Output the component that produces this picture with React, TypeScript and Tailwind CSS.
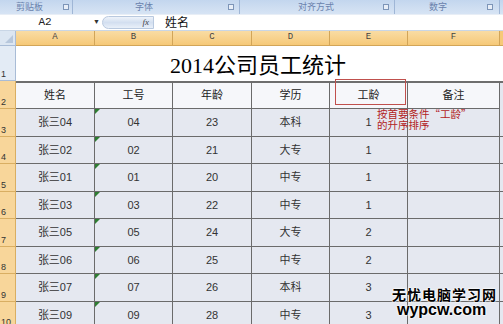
import React from 'react'

const rows = [
  ['张三04', '04', '23', '本科', '1'],
  ['张三02', '02', '21', '大专', '1'],
  ['张三01', '01', '20', '中专', '1'],
  ['张三03', '03', '22', '中专', '1'],
  ['张三05', '05', '24', '大专', '2'],
  ['张三06', '06', '25', '中专', '2'],
  ['张三07', '07', '26', '本科', '3'],
  ['张三09', '09', '28', '中专', '3'],
]

const font = { fontFamily: '"Liberation Sans", "Noto Sans CJK SC", sans-serif' }

function Launcher() {
  return (
    <span className="inline-block w-[6px] h-[6px] border border-[#7d95b8] bg-[#e8eef7]" />
  )
}

function RowHead({ n, active }: { n: number; active: boolean }) {
  return (
    <div
      className={
        'flex items-end pl-[1px] text-[9px] leading-none pb-[1px] border-b border-r ' +
        (active ? 'bg-[#f8d69a] border-[#d9ae62] text-[#333]' : 'bg-[#e3ebf5] border-[#a9bcd6] text-[#333]')
      }
    >
      {n}
    </div>
  )
}

export default function App() {
  return (
    <div className="w-[503px] h-[324px] overflow-hidden relative bg-white text-[#222]" style={font}>
      {/* ribbon group labels */}
      <div className="h-[14px] flex bg-gradient-to-b from-[#c3d6ee] to-[#d7e4f4] text-[9px] text-[#6a82ad] leading-[14px]">
        <div className="w-[73px] flex justify-between items-center pl-[16px] pr-[3px] border-r border-[#9fb6d6]">
          <span>剪贴板</span>
          <Launcher />
        </div>
        <div className="w-[167px] flex justify-between items-center pl-[62px] pr-[5px] border-r border-[#9fb6d6]">
          <span>字体</span>
          <Launcher />
        </div>
        <div className="w-[155px] flex justify-between items-center pl-[58px] pr-[5px] border-r border-[#9fb6d6]">
          <span>对齐方式</span>
          <Launcher />
        </div>
        <div className="w-[105px] flex justify-between items-center pl-[34px] pr-[6px] border-r border-[#9fb6d6]">
          <span>数字</span>
          <Launcher />
        </div>
        <div className="flex-1" />
      </div>

      {/* formula bar */}
      <div className="h-[17px] flex items-center bg-white border-t border-[#e8eef6] border-b border-b-[#c9d6e6]">
        <div className="w-[90px] text-center text-[11px]" style={{ fontFamily: '"Liberation Mono", monospace' }}>
          A2
        </div>
        <div className="w-[12px] text-[7px] text-[#333] pl-[3px]">▼</div>
        <div className="w-[52px] h-[13px] rounded-l-full rounded-r-[3px] bg-gradient-to-b from-[#eef3fa] via-[#d3dff0] to-[#e9f0f9] border border-[#b9c9df] flex items-center justify-end pr-[4px]">
          <span className="text-[9px] italic text-[#444]" style={{ fontFamily: '"Liberation Serif", serif' }}>fx</span>
        </div>
        <div className="pl-[11px] text-[12px] text-[#111]">姓名</div>
      </div>

      {/* grid */}
      <div className="grid grid-cols-[16px_79px_78px_79px_78px_78px_92px_3px] grid-rows-[15px_35px_28px_repeat(8,27.5px)]">
        {/* column header */}
        <div className="bg-[#dce6f2] border-r border-b border-[#a9bcd6] relative">
          <div className="absolute right-[2px] bottom-[2px] w-0 h-0 border-l-[8px] border-l-transparent border-b-[8px] border-b-[#b7c7dc]" />
        </div>
        {['A', 'B', 'C', 'D', 'E', 'F'].map(c => (
          <div
            key={c}
            className="bg-gradient-to-b from-[#f9dca4] to-[#f6c978] border-r border-b border-[#d2a558] flex items-center justify-center text-[9px] text-[#444]"
            style={{ fontFamily: '"Liberation Mono", monospace' }}
          >
            {c}
          </div>
        ))}
        <div className="bg-[#f6c978] border-b border-[#d2a558]" />

        {/* row 1 title */}
        <RowHead n={1} active={false} />
        <div className="col-span-6 bg-white flex items-center justify-center pt-[3px] text-[22px] text-black" style={{ fontFamily: '"Liberation Serif", "Noto Sans CJK SC", serif' }}>
          2014公司员工统计
        </div>
        <div className="bg-white" />

        {/* row 2 header */}
        <RowHead n={2} active={true} />
        {['姓名', '工号', '年龄', '学历', '工龄', '备注'].map(h => (
          <div key={h} className="bg-[#f6f7fa] border-t-2 border-t-[#6e6e6e] border-r border-b border-[#6b6b6b] flex items-center justify-center text-[11px] text-[#222]">
            {h}
          </div>
        ))}
        <div className="border-t-2 border-t-[#6e6e6e] bg-[#e4e7ef]" />

        {rows.map((r, i) => (
          <React.Fragment key={i}>
            <RowHead n={i + 3} active={true} />
            {r.map((v, j) => (
              <div key={j} className="relative bg-[#e5e8f0] border-r border-b border-[#6b6b6b] flex items-center justify-center text-[11px] text-[#333]">
                {j === 1 && (
                  <div className="absolute left-0 top-0 w-0 h-0 border-t-[5px] border-t-[#2e7d32] border-r-[5px] border-r-transparent" />
                )}
                {v}
              </div>
            ))}
            <div className="relative bg-[#e5e8f0] border-r border-b border-[#6b6b6b]" />
            <div className="bg-[#e5e8f0] border-b border-[#6b6b6b]" />
          </React.Fragment>
        ))}
      </div>

      {/* red highlight box */}
      <div className="absolute left-[335px] top-[79px] w-[71px] h-[26px] border border-[#c0504d]" />

      {/* annotation */}
      <div
        className="absolute left-[377px] top-[108px] text-[10.5px] leading-[11px] text-[#b22222]"
        style={{ fontFamily: '"Noto Sans CJK SC", sans-serif' }}
      >
        <div>按首要条件“工龄”</div>
        <div>的升序排序</div>
      </div>

      {/* watermark */}
      <div
        className="absolute left-[392px] top-[287px] text-black font-bold leading-none"
        style={{ textShadow: '0 0 2px #fff, 0 0 2px #fff, 0 0 2px #fff' }}
      >
        <div className="text-[14px] tracking-[1px]" style={{ fontFamily: '"Noto Sans CJK SC", sans-serif' }}>无忧电脑学习网</div>
        <div className="text-[16px] pl-[5px] mt-[1px]" style={{ fontFamily: '"Liberation Sans", sans-serif' }}>wypcw.com</div>
      </div>
    </div>
  )
}
